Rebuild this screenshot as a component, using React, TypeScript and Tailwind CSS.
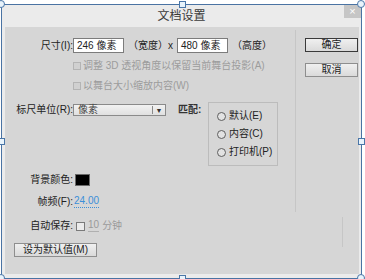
import React from 'react';

const font = "font-['Liberation_Sans','Noto_Sans_CJK_SC',sans-serif]";

function Checkbox({ disabled }: { disabled?: boolean }) {
    return (
        <div
            className={
                disabled
                    ? 'w-[8px] h-[8px] border border-[#b4b4b4] bg-[#d0d0d0] shrink-0'
                    : 'w-[9px] h-[9px] border border-[#7a7a7a] bg-[#ebebeb] shrink-0'
            }
        />
    );
}

function Radio({ label }: { label: string }) {
    return (
        <div className="flex items-center h-[18px]">
            <div className="w-[9px] h-[9px] rounded-full border border-[#5e5e5e] bg-[#e2e2e2] shrink-0" />
            <span className="ml-[3px] text-[10px] text-[#222] leading-none">{label}</span>
        </div>
    );
}

function Button({ label, primary, w }: { label: string; primary?: boolean; w: string }) {
    return (
        <div
            className={`${w} h-[14px] flex items-center justify-center text-[10px] leading-none text-[#222] bg-gradient-to-b from-[#f0f0f0] to-[#dadada] border ${
                primary ? 'border-[#3a3a3a]' : 'border-[#8e8e8e]'
            }`}
        >
            {label}
        </div>
    );
}

function Handle({ pos, round }: { pos: string; round?: boolean }) {
    return (
        <div
            className={`absolute ${pos} ${
                round ? 'w-[8px] h-[8px] rounded-full' : 'w-[7px] h-[7px]'
            } border border-[#4a76a8] bg-[#e8f3fb]`}
        />
    );
}

export default function App() {
    return (
        <div className={`relative w-[365px] h-[279px] bg-white overflow-hidden ${font}`}>
            <div className="pt-[4px] pl-[1px]">
                <div className="w-[361px] h-[275px] border border-[#4a73a3] bg-[#ebebeb] flex flex-col">
                    {/* title bar */}
                    <div className="relative h-[22px] flex items-center justify-center">
                        <span className="text-[12px] text-[#3a3a3a] leading-none">文档设置</span>
                        <div className="absolute right-0 top-0 w-[17px] h-[13px] bg-[#c6c6c6] flex items-center justify-center text-white text-[11px] leading-none">
                            ×
                        </div>
                    </div>

                    {/* body */}
                    <div className="ml-[3px] mr-[2px] h-[247px] bg-[#d6d6d6] flex">
                        {/* left part */}
                        <div className="w-[290px] flex flex-col text-[10px] text-[#222] leading-none">
                            {/* size row */}
                            <div className="mt-[11px] h-[15px] flex items-center">
                                <span className="w-[68px] text-right">尺寸(I):</span>
                                <div className="w-[51px] h-[15px] border border-[#7c7c7c] bg-white flex items-center pl-[3px]">
                                    246 像素
                                </div>
                                <span className="w-[53px] pl-[4px]">（宽度）x</span>
                                <div className="w-[51px] h-[15px] border border-[#7c7c7c] bg-white flex items-center pl-[3px]">
                                    480 像素
                                </div>
                                <span className="pl-[4px]">（高度）</span>
                            </div>

                            {/* checkbox rows */}
                            <div className="mt-[6px] h-[14px] flex items-center pl-[68px] text-[#9c9c9c]">
                                <Checkbox disabled />
                                <span className="ml-[2px]">调整 3D 透视角度以保留当前舞台投影(A)</span>
                            </div>
                            <div className="mt-[6px] h-[14px] flex items-center pl-[68px] text-[#9c9c9c]">
                                <Checkbox disabled />
                                <span className="ml-[2px]">以舞台大小缩放内容(W)</span>
                            </div>

                            {/* ruler + match */}
                            <div className="mt-[9px] flex items-start">
                                <div className="h-[14px] mt-[1px] flex items-center">
                                    <span className="w-[68px] text-right">标尺单位(R):</span>
                                    <div className="w-[93px] h-[12px] border border-[#8a8a8a] bg-gradient-to-b from-[#f2f2f2] to-[#e0e0e0] flex items-center">
                                        <span className="flex-1 pl-[4px] text-[#444]">像素</span>
                                        <div className="w-px h-[8px] bg-[#8a8a8a]" />
                                        <span className="w-[12px] text-center text-[7px] text-[#333]">▼</span>
                                    </div>
                                    <span className="ml-[12px] w-[30px] font-bold text-[#333]">匹配:</span>
                                </div>
                                <div className="w-[70px] h-[64px] border border-[#bcbcbc] pt-[4px] pl-[8px] flex flex-col">
                                    <Radio label="默认(E)" />
                                    <Radio label="内容(C)" />
                                    <Radio label="打印机(P)" />
                                </div>
                            </div>

                            {/* background color */}
                            <div className="mt-[7px] h-[14px] flex items-center">
                                <span className="w-[68px] text-right">背景颜色:</span>
                                <div className="ml-[2px] w-[15px] h-[12px] border border-[#6a6a6a] bg-black" />
                            </div>

                            {/* frame rate */}
                            <div className="mt-[8px] h-[14px] flex items-center">
                                <span className="w-[68px] text-right">帧频(F):</span>
                                <span className="ml-[1px] text-[#3c8fd8] border-b border-dotted border-[#3c8fd8] pb-[1px]">
                                    24.00
                                </span>
                            </div>

                            {/* autosave */}
                            <div className="mt-[10px] h-[14px] flex items-center">
                                <span className="w-[68px] text-right">自动保存:</span>
                                <div className="ml-[3px]">
                                    <Checkbox />
                                </div>
                                <span className="ml-[3px] text-[#9a9a9a] border-b border-[#b0b0b0] pb-[1px]">10</span>
                                <span className="ml-[3px] text-[#9a9a9a]">分钟</span>
                            </div>

                            {/* default button */}
                            <div className="mt-[10px] pl-[9px]">
                                <Button label="设为默认值(M)" w="w-[83px]" />
                            </div>
                        </div>

                        {/* right part */}
                        <div className="flex">
                            <div className="mt-[3px] w-px h-[182px] bg-[#c6c6c6]" />
                            <div className="ml-[9px] flex flex-col">
                                <div className="mt-[11px]">
                                    <Button label="确定" primary w="w-[53px]" />
                                </div>
                                <div className="mt-[11px]">
                                    <Button label="取消" w="w-[53px]" />
                                </div>
                                <div className="ml-[37px] mt-[140px] w-px h-[30px] bg-[#c6c6c6]" />
                            </div>
                        </div>
                    </div>
                </div>
            </div>

            {/* selection handles */}
            <Handle round pos="left-[-3px] top-0" />
            <Handle round pos="left-[357px] top-0" />
            <Handle round pos="left-[-3px] top-[274px]" />
            <Handle round pos="left-[357px] top-[274px]" />
            <Handle pos="left-[179px] top-[1px]" />
            <Handle pos="left-[179px] top-[275px]" />
            <Handle pos="left-[-2px] top-[138px]" />
            <Handle pos="left-[358px] top-[138px]" />
        </div>
    );
}
